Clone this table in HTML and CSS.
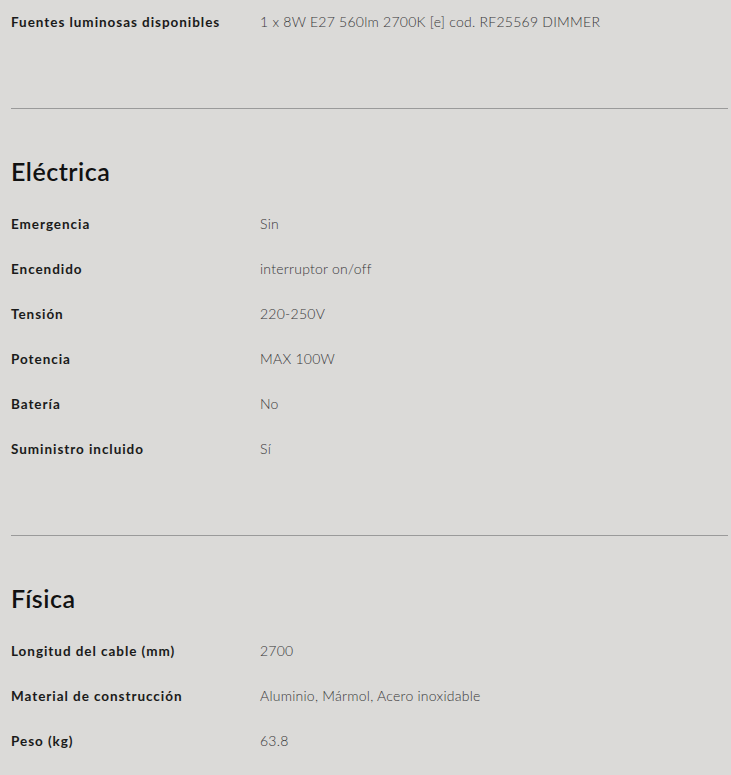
FILE: index.html
```html
<!DOCTYPE html>
<html lang="es">
<head>
<meta charset="utf-8">
<link rel="stylesheet" href="styles.css">
</head>
<body>
<div class="page">
  <section class="group">
    <div class="row"><div class="label">Fuentes luminosas disponibles</div><div class="value">1 x 8W E27 560lm 2700K [e] cod. RF25569 DIMMER</div></div>
  </section>
  <hr class="divider">
  <section class="group">
    <h2 class="heading">Eléctrica</h2>
    <div class="row"><div class="label">Emergencia</div><div class="value">Sin</div></div>
    <div class="row"><div class="label">Encendido</div><div class="value">interruptor on/off</div></div>
    <div class="row"><div class="label">Tensión</div><div class="value">220-250V</div></div>
    <div class="row"><div class="label">Potencia</div><div class="value">MAX 100W</div></div>
    <div class="row"><div class="label">Batería</div><div class="value">No</div></div>
    <div class="row"><div class="label">Suministro incluido</div><div class="value">Sí</div></div>
  </section>
  <hr class="divider">
  <section class="group">
    <h2 class="heading">Física</h2>
    <div class="row"><div class="label">Longitud del cable (mm)</div><div class="value">2700</div></div>
    <div class="row"><div class="label">Material de construcción</div><div class="value">Aluminio, Mármol, Acero inoxidable</div></div>
    <div class="row"><div class="label">Peso (kg)</div><div class="value">63.8</div></div>
  </section>
</div>
</body>
</html>
```
FILE: styles.css
```css
html, body {
  margin: 0;
  padding: 0;
  background: #dbdad8;
}
.page {
  padding: 0 3px 0 11px;
  font-family: Lato, "Noto Sans", sans-serif;
}
.group {
  display: flex;
  flex-direction: column;
}
.row {
  display: grid;
  grid-template-columns: 249px 1fr;
  height: 45px;
  box-sizing: border-box;
  padding-bottom: 2px;
  align-items: center;
}
.label {
  font-size: 13.5px;
  font-weight: 700;
  letter-spacing: 0.95px;
  color: #1a1a1a;
}
.value {
  font-size: 14px;
  font-weight: 300;
  letter-spacing: 0.25px;
  color: #383838;
}
.divider {
  border: 0;
  border-top: 1px solid #9a9a9a;
  margin: 63px 0 0 0;
  height: 0;
}
.heading {
  margin: 47px 0 16px 0;
  font-size: 25px;
  line-height: 30px;
  font-weight: 600;
  color: #111;
  letter-spacing: 0.5px;
}
```
